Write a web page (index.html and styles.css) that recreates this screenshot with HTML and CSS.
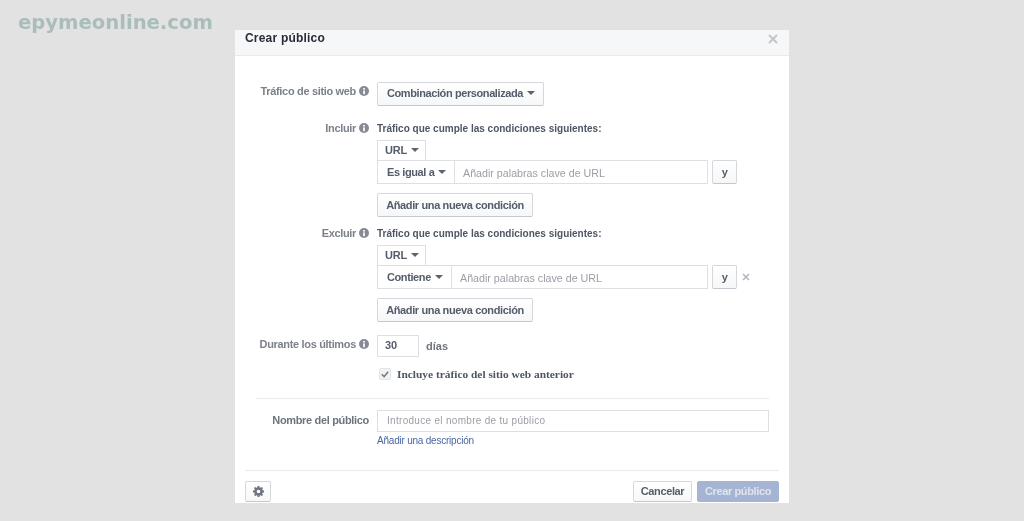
FILE: index.html
```html
<!DOCTYPE html>
<html lang="es">
<head>
<meta charset="utf-8">
<title>Crear público</title>
<link rel="stylesheet" href="styles.css">
</head>
<body>
<div class="watermark">epymeonline.com</div>
<main class="modal">
  <header class="modal-head">
    <h1 class="modal-title">Crear público</h1>
    <svg class="close" width="10" height="10" viewBox="0 0 10 10"><path d="M1 1l8 8M9 1l-8 8"/></svg>
  </header>
  <section class="modal-body">
    <div class="row row-traffic">
      <div class="label">Tráfico de sitio web<svg class="info" viewBox="0 0 10 10"><circle cx="5" cy="5" r="5"/><rect x="4.2" y="4.4" width="1.7" height="3.8"/><rect x="4.2" y="2" width="1.7" height="1.6"/></svg></div>
      <div class="field"><button class="btn btn-combo">Combinación personalizada<span class="caret"></span></button></div>
    </div>

    <div class="row row-include">
      <div class="label label-top">Incluir<svg class="info" viewBox="0 0 10 10"><circle cx="5" cy="5" r="5"/><rect x="4.2" y="4.4" width="1.7" height="3.8"/><rect x="4.2" y="2" width="1.7" height="1.6"/></svg></div>
      <div class="field">
        <div class="rule-title">Tráfico que cumple las condiciones siguientes:</div>
        <div class="url-tab">URL<span class="caret"></span></div>
        <div class="cond">
          <div class="cond-box">
            <div class="cond-op op-equal">Es igual a<span class="caret"></span></div>
            <div class="cond-input">Añadir palabras clave de URL</div>
          </div>
          <button class="btn btn-y">y</button>
        </div>
        <button class="btn btn-add">Añadir una nueva condición</button>
      </div>
    </div>

    <div class="row row-exclude">
      <div class="label label-top">Excluir<svg class="info" viewBox="0 0 10 10"><circle cx="5" cy="5" r="5"/><rect x="4.2" y="4.4" width="1.7" height="3.8"/><rect x="4.2" y="2" width="1.7" height="1.6"/></svg></div>
      <div class="field">
        <div class="rule-title">Tráfico que cumple las condiciones siguientes:</div>
        <div class="url-tab">URL<span class="caret"></span></div>
        <div class="cond">
          <div class="cond-box">
            <div class="cond-op op-contains">Contiene<span class="caret"></span></div>
            <div class="cond-input">Añadir palabras clave de URL</div>
          </div>
          <button class="btn btn-y">y</button>
          <svg class="remove" width="8" height="8" viewBox="0 0 8 8"><path d="M1 1l6 6M7 1l-6 6"/></svg>
        </div>
        <button class="btn btn-add">Añadir una nueva condición</button>
      </div>
    </div>

    <div class="row row-days">
      <div class="label">Durante los últimos<svg class="info" viewBox="0 0 10 10"><circle cx="5" cy="5" r="5"/><rect x="4.2" y="4.4" width="1.7" height="3.8"/><rect x="4.2" y="2" width="1.7" height="1.6"/></svg></div>
      <div class="field days">
        <div class="days-input">30</div>
        <span class="days-unit">días</span>
      </div>
    </div>

    <div class="row row-check">
      <div class="label"></div>
      <div class="field check">
        <span class="checkbox"><svg width="12" height="12" viewBox="0 0 12 12"><path d="M2.8 6.3l2.3 2.4 4-5"/></svg></span>
        <span class="check-text">Incluye tráfico del sitio web anterior</span>
      </div>
    </div>

    <hr class="rule-inner">

    <div class="row row-name">
      <div class="label label-dark">Nombre del público</div>
      <div class="field">
        <div class="name-input">Introduce el nombre de tu público</div>
        <a class="desc-link" href="#">Añadir una descripción</a>
      </div>
    </div>
  </section>
  <footer class="modal-foot">
    <button class="btn btn-gear"><svg width="11" height="11" viewBox="0 0 12 12"><path fill-rule="evenodd" d="M5 0h2l.3 1.6 1 .4L9.700 1.100l1.200 1.200-.9 1.400.4 1 1.600.3v2l-1.600.3-.4 1 .9 1.400-1.200 1.200-1.400-.9-1 .4L7 12H5l-.3-1.600-1-.4-1.400.9-1.200-1.200.9-1.400-.4-1L0 7V5l1.600-.3.4-1-.9-1.400 1.200-1.200 1.400.9 1-.4zM6 4a2 2 0 1 0 0 4 2 2 0 0 0 0-4z"/></svg></button>
    <div class="foot-actions">
      <button class="btn btn-cancel">Cancelar</button>
      <button class="btn btn-primary">Crear público</button>
    </div>
  </footer>
</main>
</body>
</html>
```
FILE: styles.css
```css
* { box-sizing: border-box; }
html, body { margin: 0; height: 100%; }
body {
  background: #e2e2e2;
  font-family: "Liberation Sans", Arial, sans-serif;
  font-size: 12px;
  color: #4e5665;
  overflow: hidden;
}
.watermark {
  position: absolute;
  left: 18px;
  top: 10px;
  font-family: "DejaVu Sans", sans-serif;
  font-weight: 700;
  font-size: 19.600px;
  line-height: 26px;
  color: #a9bdba;
  filter: blur(0.4px);
}
.modal {
  width: 554px;
  height: 473px;
  margin: 30px auto 0;
  background: #fff;
  display: flex;
  flex-direction: column;
  filter: blur(0.35px);
}
.modal-head {
  height: 26px;
  flex: none;
  background: #f6f7f9;
  border-bottom: 1px solid #e9eaed;
  display: flex;
  justify-content: space-between;
  padding: 0 11px 0 10px;
}
.modal-title {
  margin: 0;
  font-size: 12px;
  line-height: 16px;
  font-weight: 700;
  color: #262c3a;
  letter-spacing: 0.2px;
}
.close { margin-top: 4px; }
.close path { stroke: #c2c5cb; stroke-width: 2; fill: none; }
.modal-body {
  flex: 1;
  padding-top: 26px;
  display: flex;
  flex-direction: column;
}
.row {
  display: grid;
  grid-template-columns: 134px 1fr;
  column-gap: 8px;
}
.label {
  display: flex;
  justify-content: flex-end;
  align-items: center;
  gap: 3px;
  font-size: 11px;
  letter-spacing: -0.33px;
  font-weight: 700;
  color: #7c808a;
  height: 18px;
}
.info { width: 10px; height: 10px; flex: none; }
.info circle { fill: #868a94; }
.info rect { fill: #fff; }
.field { min-width: 0; }
.btn {
  font-family: inherit;
  font-size: 11px;
  letter-spacing: -0.37px;
  font-weight: 700;
  color: #555c6a;
  background: linear-gradient(#fff, #f6f7f8);
  border: 1px solid #d5d7dc;
  border-bottom-color: #c4c7cd;
  border-radius: 2px;
  padding: 0;
  display: block;
}
.caret {
  display: inline-block;
  width: 0;
  height: 0;
  border: 4px solid transparent;
  border-top: 4px solid #5b6270;
  border-bottom: 0;
  margin-left: 4px;
  vertical-align: 2px;
}
.btn-combo { width: 167px; height: 24px; padding: 0 0 2px 1px; letter-spacing: -0.4px; }
.row-include { margin-top: 15px; }
.row-exclude { margin-top: 9px; }
.label-top { height: 14px; }
.rule-title {
  height: 19px;
  font-size: 10px;
  font-weight: 700;
  line-height: 16px;
  color: #4e5665;
  white-space: nowrap;
}
.url-tab {
  width: 49px;
  height: 20px;
  border: 1px solid #dddfe2;
  border-bottom: 0;
  font-size: 11px;
  letter-spacing: -0.2px;
  font-weight: 700;
  line-height: 19px;
  padding-left: 7px;
  color: #555c6a;
}
.cond { display: flex; align-items: center; }
.cond-box {
  width: 331px;
  height: 24px;
  display: flex;
  border: 1px solid #dddfe2;
}
.cond-op {
  height: 22px;
  font-size: 11px;
  letter-spacing: -0.4px;
  font-weight: 700;
  line-height: 23px;
  padding-left: 9px;
  border-right: 1px solid #dddfe2;
  flex: none;
  color: #555c6a;
}
.op-equal { width: 77px; }
.op-contains { width: 74px; }
.cond-input {
  flex: 1;
  font-size: 10.700px;
  line-height: 24px;
  padding-left: 8px;
  color: #9b9ea6;
}
.btn-y { width: 25px; height: 24px; margin-left: 4px; }
.remove { margin-left: 5px; }
.remove path { stroke: #b4b7bd; stroke-width: 1.600; fill: none; }
.btn-add { width: 156px; height: 24px; margin-top: 9px; }
.row-days { margin-top: 13px; }
.days { display: flex; align-items: center; gap: 7px; }
.days-input {
  width: 42px;
  height: 22px;
  border: 1px solid #dddfe2;
  font-size: 11px;
  font-weight: 700;
  line-height: 18px;
  padding-left: 7px;
  color: #555c6a;
}
.days-unit { font-size: 11px; font-weight: 700; color: #6f7480; }
.row-check { margin-top: 11px; }
.row-check .label { height: 12px; }
.check { display: flex; align-items: center; height: 12px; padding-left: 2px; gap: 6px; }
.checkbox {
  width: 12px;
  height: 12px;
  background: #f1f2f4;
  border: 1px solid #e3e4e8;
  border-radius: 2px;
  display: block;
  flex: none;
}
.checkbox svg { display: block; margin: -1px; }
.checkbox path { fill: none; stroke: #6f7480; stroke-width: 1.500; }
.check-text {
  font-family: "Liberation Serif", "Liberation Sans", serif;
  font-size: 11.400px;
  font-weight: 700;
  color: #4e5665;
}
.rule-inner {
  margin: 18px 20px 0 21px;
  border: 0;
  border-top: 1px solid #e9eaed;
  height: 0;
}
.row-name { margin-top: 11px; }
.row-name .label { margin-top: 1px; }
.label-dark { color: #6e7380; }
.name-input {
  width: 392px;
  height: 22px;
  border: 1px solid #dddfe2;
  font-size: 10px;
  line-height: 19px;
  padding-left: 9px;
  color: #9b9ea6;
  letter-spacing: 0.3px;
}
.desc-link {
  display: block;
  font-size: 10px;
  letter-spacing: -0.22px;
  line-height: 14px;
  margin-top: 2px;
  color: #4a66a0;
  text-decoration: none;
}
.modal-foot {
  flex: none;
  height: 33px;
  margin: 0 10px;
  border-top: 1px solid #e9eaed;
  padding-top: 10px;
  display: flex;
  justify-content: space-between;
}
.btn-gear { width: 26px; height: 21px; display: flex; align-items: center; justify-content: center; }
.btn-gear path { fill: #6f7480; }
.foot-actions { display: flex; gap: 5px; }
.btn-cancel { width: 59px; height: 21px; padding-bottom: 1px; }
.btn-primary {
  width: 82px;
  height: 21px;
  padding-bottom: 1px;
  background: #a5b4d2;
  border-color: #a5b4d2;
  color: #dfe4ee;
}
```
